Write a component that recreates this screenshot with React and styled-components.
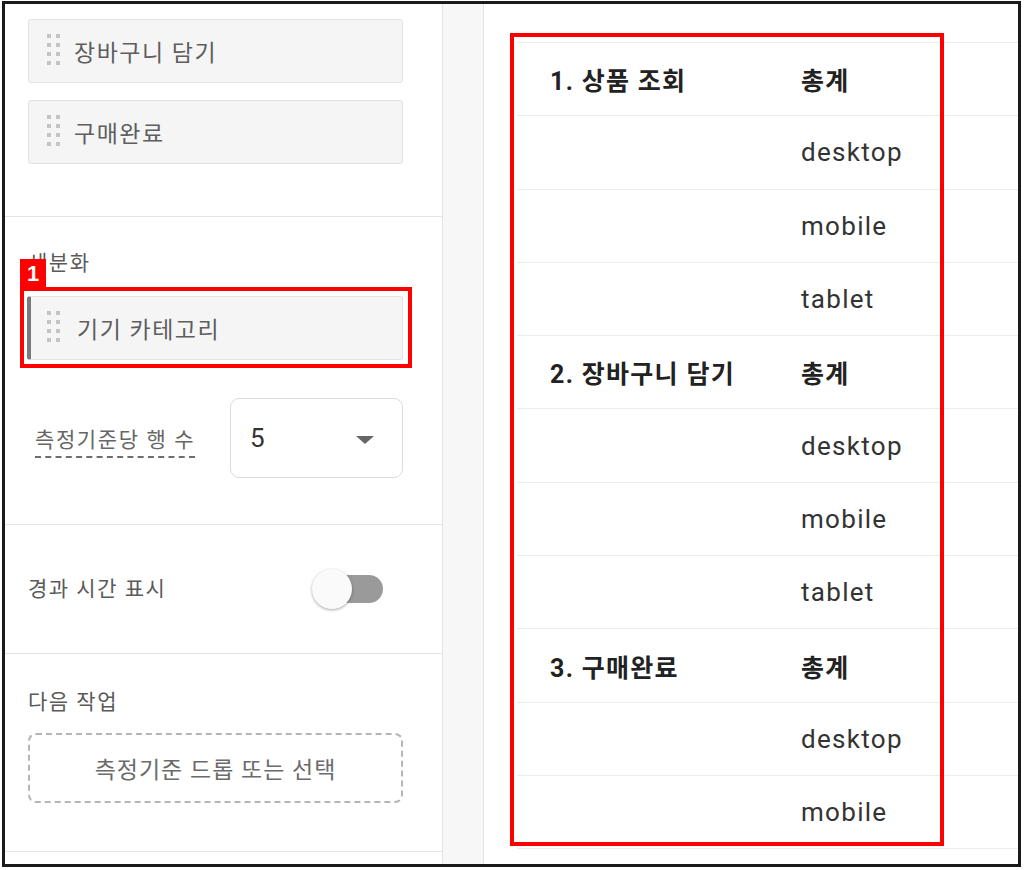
import React, { useState } from 'react';
import styled, { createGlobalStyle } from 'styled-components';

const GlobalStyle = createGlobalStyle`
  body {
    margin: 0;
    background: #fff;
    font-family: Roboto, "Noto Sans CJK KR", sans-serif;
  }
`;

const Frame = styled.div`
  margin: 1px 0 0 2px;
  width: 1019px;
  height: 866px;
  box-sizing: border-box;
  border: 3px solid #1a1a1a;
  display: flex;
  overflow: hidden;
  background: #fff;
`;

const LeftPanel = styled.div`
  width: 438px;
  box-sizing: border-box;
  border-right: 1px solid #e3e3e3;
  display: flex;
  flex-direction: column;
`;

const Section = styled.div`
  border-bottom: 1px solid #e3e3e3;
  padding: ${(p) => p.$pad};
  display: flex;
  flex-direction: column;
`;

const Gutter = styled.div`
  width: 41px;
  box-sizing: border-box;
  background: #f7f7f7;
  border-right: 1px solid #e3e3e3;
`;

const RightPanel = styled.div`
  flex: 1;
  position: relative;
  padding: 38px 0 0 33px;
`;

const Chip = styled.div`
  height: 64px;
  box-sizing: border-box;
  border: 1px solid #e2e2e2;
  border-left: ${(p) => (p.$accent ? '4px solid #7a7a7a' : '1px solid #e2e2e2')};
  border-radius: 3px;
  background: #f5f5f5;
  display: flex;
  align-items: center;
  gap: ${(p) => (p.$accent ? '17px' : '14px')};
  padding-left: ${(p) => (p.$accent ? '16px' : '18px')};
  font-size: 23px;
  letter-spacing: 1.5px;
  color: #5e5e5e;
  & + & {
    margin-top: 17px;
  }
`;

const Label = styled.div`
  font-size: 21px;
  line-height: 24px;
  letter-spacing: 1.5px;
  color: #5a5a5a;
  margin-bottom: ${(p) => p.$mb || '0'};
`;

const Highlight = styled.div`
  position: relative;
  border: 4px solid #ff0000;
  padding: 5px 5px 4px 3px;
  margin: 0 -9px 0 -8px;
`;

const Badge = styled.div`
  position: absolute;
  left: -4px;
  top: -32px;
  width: 26px;
  height: 28px;
  background: #ff0000;
  color: #fff;
  font-family: "Liberation Sans", Arial, sans-serif;
  font-weight: 700;
  font-size: 22px;
  line-height: 30px;
  text-align: center;
`;

const SettingRow = styled.div`
  display: flex;
  align-items: center;
  justify-content: space-between;
  margin-top: ${(p) => p.$mt || '0'};
`;

const DottedLabel = styled.span`
  margin: 10px 0 0 7px;
  font-size: 21px;
  line-height: 24px;
  letter-spacing: 1.6px;
  color: #666;
  padding-bottom: 4px;
  border-bottom: 2px dashed #6e6e6e;
`;

const Select = styled.div`
  width: 173px;
  height: 80px;
  box-sizing: border-box;
  border: 1px solid #dcdcdc;
  border-radius: 9px;
  display: flex;
  align-items: center;
  justify-content: space-between;
  padding: 0 28px 0 19px;
  font-size: 26px;
  color: #333;
`;

const Caret = styled.span`
  width: 0;
  height: 0;
  border-left: 9px solid transparent;
  border-right: 9px solid transparent;
  border-top: 8px solid #666;
  margin-top: 4px;
`;

const Toggle = styled.button`
  position: relative;
  width: 71px;
  height: 40px;
  margin-right: 20px;
  padding: 0;
  border: 0;
  background: none;
  cursor: pointer;
`;

const Track = styled.span`
  position: absolute;
  right: 0;
  top: 6px;
  width: 53px;
  height: 28px;
  border-radius: 14px;
  background: ${(p) => (p.$on ? '#8ab4f8' : '#9a9a9a')};
`;

const Thumb = styled.span`
  position: absolute;
  top: 0;
  left: ${(p) => (p.$on ? '31px' : '0')};
  width: 40px;
  height: 40px;
  border-radius: 50%;
  background: #fafafa;
  box-shadow: 0 1px 3px rgba(0, 0, 0, 0.35);
`;

const DropZone = styled.div`
  height: 70px;
  box-sizing: border-box;
  border: 2px dashed #b5b5b5;
  border-radius: 8px;
  display: flex;
  align-items: center;
  justify-content: center;
  font-size: 23px;
  letter-spacing: 1px;
  color: #6b6b6b;
`;

const Table = styled.div`
  display: grid;
  grid-template-columns: 284px 1fr;
  border-bottom: 1px solid #ececec;
`;

const Cell = styled.div`
  height: 73.3px;
  box-sizing: border-box;
  border-top: 1px solid #ececec;
  display: flex;
  align-items: center;
  padding-left: ${(p) => (p.$first ? '33px' : '0')};
  font-size: ${(p) => (p.$bold ? '25px' : '26px')};
  font-weight: ${(p) => (p.$bold ? 700 : 400)};
  letter-spacing: 1.3px;
  color: ${(p) => (p.$bold ? '#222' : '#333')};
`;

const RedBox = styled.div`
  position: absolute;
  left: 26px;
  top: 29px;
  width: 434px;
  height: 813px;
  box-sizing: border-box;
  border: 4px solid #ff0000;
  pointer-events: none;
`;

const DragHandle = () => (
  <svg width="13" height="34" viewBox="0 0 13 34">
    {[0, 1, 2, 3].map((r) =>
      [0, 1].map((c) => (
        <rect key={`${r}-${c}`} x={c * 9} y={r * 9} width="4" height="4" fill="#c4c4c4" />
      ))
    )}
  </svg>
);

const steps = [
  { name: '1. 상품 조회', devices: ['desktop', 'mobile', 'tablet'] },
  { name: '2. 장바구니 담기', devices: ['desktop', 'mobile', 'tablet'] },
  { name: '3. 구매완료', devices: ['desktop', 'mobile'] },
];

const App = () => {
  const [elapsed, setElapsed] = useState(false);

  return (
    <>
      <GlobalStyle />
      <Frame>
        <LeftPanel>
          <Section $pad="15px 39px 52px 23px">
            <Chip>
              <DragHandle />
              장바구니 담기
            </Chip>
            <Chip>
              <DragHandle />
              구매완료
            </Chip>
          </Section>

          <Section $pad="34px 39px 46px 23px">
            <Label $mb="12px">세분화</Label>
            <Highlight>
              <Badge>1</Badge>
              <Chip $accent>
                <DragHandle />
                기기 카테고리
              </Chip>
            </Highlight>
            <SettingRow $mt="30px">
              <DottedLabel>측정기준당 행 수</DottedLabel>
              <Select>
                5
                <Caret />
              </Select>
            </SettingRow>
          </Section>

          <Section $pad="44px 39px 44px 23px">
            <SettingRow>
              <Label>경과 시간 표시</Label>
              <Toggle onClick={() => setElapsed(!elapsed)}>
                <Track $on={elapsed} />
                <Thumb $on={elapsed} />
              </Toggle>
            </SettingRow>
          </Section>

          <Section $pad="36px 39px 48px 23px">
            <Label $mb="19px">다음 작업</Label>
            <DropZone>측정기준 드롭 또는 선택</DropZone>
          </Section>
        </LeftPanel>

        <Gutter />

        <RightPanel>
          <Table>
            {steps.map((step) => (
              <React.Fragment key={step.name}>
                <Cell $first $bold>{step.name}</Cell>
                <Cell $bold>총계</Cell>
                {step.devices.map((d) => (
                  <React.Fragment key={d}>
                    <Cell $first />
                    <Cell>{d}</Cell>
                  </React.Fragment>
                ))}
              </React.Fragment>
            ))}
          </Table>
          <RedBox />
        </RightPanel>
      </Frame>
    </>
  );
};

export default App;
